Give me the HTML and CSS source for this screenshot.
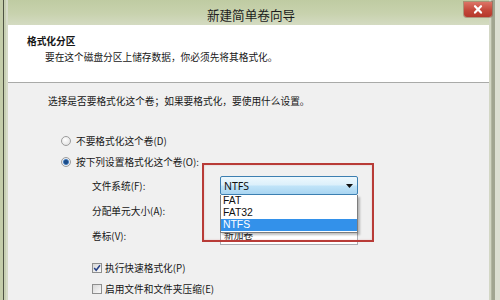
FILE: index.html
```html
<!DOCTYPE html>
<html lang="zh-CN">
<head>
<meta charset="utf-8">
<title>新建简单卷向导</title>
<link rel="stylesheet" href="styles.css">
</head>
<body>
<div class="window">
  <div class="frame-left"></div>
  <div class="main">
    <div class="titlebar">
      <span></span>
      <span class="title">新建简单卷向导</span>
      <span class="close"><svg width="28" height="15" viewBox="0 0 28 15"><path d="M11 4.2 L17 10.6 M17 4.2 L11 10.6" stroke="#fff" stroke-width="2.2" stroke-linecap="round"/></svg></span>
    </div>
    <div class="client">
      <div class="header">
        <div class="h-title">格式化分区</div>
        <div class="h-sub">要在这个磁盘分区上储存数据，你必须先将其格式化。</div>
      </div>
      <div class="content">
        <p class="intro">选择是否要格式化这个卷；如果要格式化，要使用什么设置。</p>
        <div class="radios">
          <div class="opt"><span class="radio"></span><span>不要格式化这个卷(D)</span></div>
          <div class="opt"><span class="radio on"></span><span>按下列设置格式化这个卷(O):</span></div>
        </div>
        <div class="form">
          <span class="lbl">文件系统(F):</span>
          <div class="combo-wrap">
            <div class="combo open"><span class="val">NTFS</span><svg width="7" height="4" viewBox="0 0 7 4"><path d="M0 0H7L3.5 4Z" fill="#111"/></svg></div>
            <ul class="list">
              <li>FAT</li>
              <li>FAT32</li>
              <li class="sel">NTFS</li>
            </ul>
            <div class="mark"></div>
          </div>
          <span class="lbl">分配单元大小(A):</span>
          <div class="combo plain"></div>
          <span class="lbl">卷标(V):</span>
          <div class="textbox">新加卷</div>
        </div>
        <div class="checks">
          <div class="opt"><span class="check"><svg width="8" height="8" viewBox="0 0 8 8"><path d="M1.2 4 L3.2 6.3 L7 1.3" fill="none" stroke="#243f86" stroke-width="1.5"/></svg></span><span>执行快速格式化(P)</span></div>
          <div class="opt"><span class="check"></span><span>启用文件和文件夹压缩(E)</span></div>
        </div>
      </div>
    </div>
  </div>
  <div class="frame-right"></div>
</div>
</body>
</html>
```

FILE: styles.css
```css
body {
  margin: 0;
}

.window {
  width: 500px;
  height: 300px;
  display: flex;
  overflow: hidden;
  font-family: "Noto Sans CJK SC", "Noto Sans", sans-serif;
  font-size: 9.7px;
  color: #161616;
  background: #d2d8c2;
}

.frame-left {
  width: 8px;
  flex: none;
  background: linear-gradient(to right, #c4cdaa 0 3px, #4f5344 3px 4px, #c8d0b3 4px 6px, #d6dbc8 6px 8px);
}

.frame-right {
  width: 11px;
  flex: none;
  background: linear-gradient(to right, #d3d7c5 0 2px, #b2b6a0 2px 3px, #a1a590 3px 6px, #dcdfd1 6px 11px);
}

.main {
  flex: 1;
  min-width: 0;
  display: flex;
  flex-direction: column;
}

.titlebar {
  height: 25px;
  flex: none;
  box-sizing: border-box;
  padding-left: 5px;
  display: grid;
  grid-template-columns: 1fr auto 1fr;
  align-items: start;
  background: linear-gradient(#bfcba2, #c8d2ae 55%, #d4dbc2);
}

.title {
  font-size: 12.6px;
  line-height: 16px;
  margin-top: 7px;
  color: #1c1c1c;
}

.close {
  position: relative;
  justify-self: end;
  margin-top: 2px;
  margin-right: -3px;
  width: 28px;
  height: 15px;
  border-radius: 0 0 3px 3px;
  background: linear-gradient(#dc7466, #c4483a 55%, #b5372b);
  box-shadow: 0 0 0 1px rgba(120, 40, 30, 0.35);
}

.close svg {
  display: block;
}

.client {
  flex: 1;
  display: flex;
  flex-direction: column;
  background: #f0f0f0;
}

.header {
  height: 58px;
  flex: none;
  box-sizing: border-box;
  padding: 9px 0 0 19px;
  background: #fff;
  border-bottom: 1px solid #a9aaa8;
}

.h-title {
  font-weight: bold;
  line-height: 14px;
}

.h-sub {
  line-height: 14px;
  margin: 2px 0 0 18px;
}

.content {
  padding: 11px 0 0 40px;
}

.intro {
  margin: 0;
  line-height: 14px;
}

.radios {
  margin-top: 26px;
  padding-left: 13px;
  display: flex;
  flex-direction: column;
  gap: 7px;
}

.opt {
  display: flex;
  align-items: center;
  gap: 5px;
  line-height: 14px;
}

.radio {
  width: 10px;
  height: 10px;
  flex: none;
  box-sizing: border-box;
  border-radius: 50%;
  border: 1px solid #9c9c9c;
  background: radial-gradient(circle at 40% 35%, #ffffff, #dcdcdc);
}

.radio.on {
  background: radial-gradient(circle, #1c4c88 0 1.8px, #4f86c4 2.6px, #e9edf3 3.4px, #dadada 100%);
}

.form {
  margin-top: 4px;
  margin-left: 44px;
  display: grid;
  grid-template-columns: 128px 138px;
  grid-auto-rows: 25px;
  align-items: center;
}

.combo-wrap {
  position: relative;
  height: 19px;
}

.combo {
  width: 138px;
  height: 19px;
  box-sizing: border-box;
  border-radius: 2px;
}

.combo.open {
  display: flex;
  align-items: center;
  justify-content: space-between;
  padding: 0 4px 0 3px;
  border: 1px solid #3c7fb1;
  background: linear-gradient(#eef8fd, #dcf0fb 45%, #bfe3f8 55%, #a9d5f1);
  font-family: "Noto Sans", sans-serif;
  font-size: 10.5px;
  color: #111;
}

.combo.plain {
  border: 1px solid #acacac;
  background: linear-gradient(#f3f3f3, #dddddd);
}

.list {
  position: absolute;
  z-index: 2;
  top: 19px;
  left: 0;
  width: 138px;
  box-sizing: border-box;
  margin: 0;
  padding: 0 0 1px;
  list-style: none;
  border: 1px solid #7d7d7d;
  border-top: none;
  background: #fff;
  box-shadow: 2px 2px 2px rgba(0, 0, 0, 0.25);
  font-family: "Liberation Sans", "Noto Sans", sans-serif;
  font-size: 10.4px;
  color: #111;
}

.list li {
  height: 12px;
  line-height: 12px;
  padding-left: 2px;
}

.list li.sel {
  background: #3391ea;
  color: #fff;
}

.mark {
  position: absolute;
  z-index: 3;
  left: -18px;
  top: -13px;
  width: 172px;
  height: 79px;
  box-sizing: border-box;
  border: 2px solid #b83b37;
  box-shadow: inset 0 0 2px rgba(200, 90, 90, 0.35);
}

.textbox {
  width: 138px;
  height: 19px;
  box-sizing: border-box;
  border: 1px solid #abadb3;
  background: #fff;
  padding-left: 3px;
  line-height: 17px;
  color: #222;
}

.checks {
  margin-top: 13px;
  padding-left: 44px;
  display: flex;
  flex-direction: column;
  gap: 7px;
}

.checks .opt {
  gap: 3px;
}

.check {
  width: 10px;
  height: 10px;
  flex: none;
  box-sizing: border-box;
  border: 1px solid #8e8f8f;
  background: linear-gradient(135deg, #d8d8d8, #fafafa);
  display: flex;
  align-items: center;
  justify-content: center;
}

.check svg {
  display: block;
}
```
